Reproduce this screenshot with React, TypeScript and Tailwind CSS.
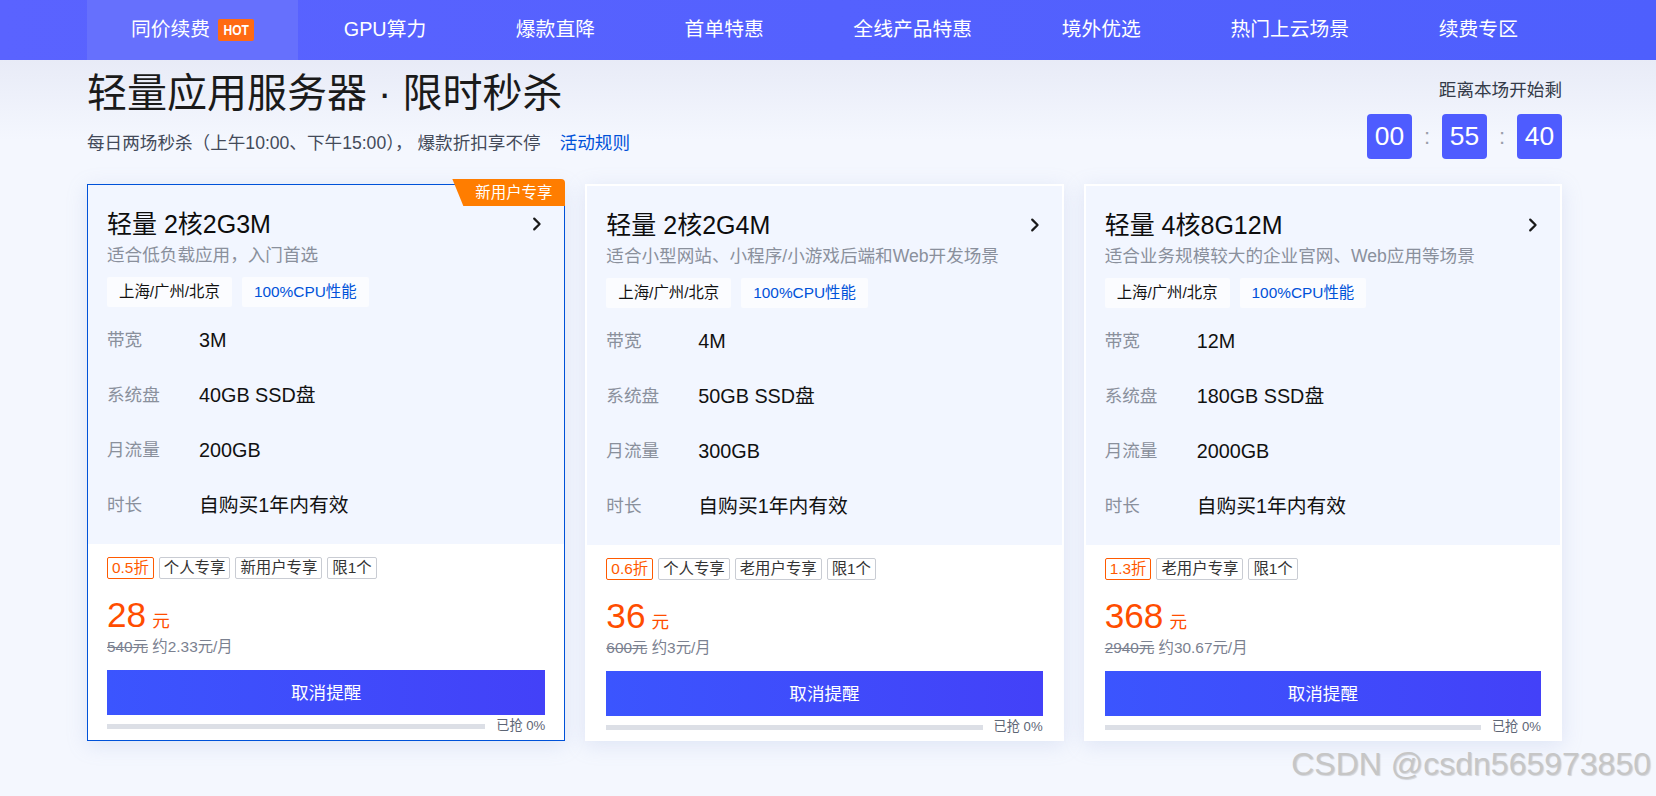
import React from "react";

type CardData = {
  title: string;
  desc: string;
  bw: string;
  disk: string;
  flow: string;
  discount: string;
  tags: string[];
  price: string;
  orig: string;
  monthly: string;
  selected?: boolean;
};

const cards: CardData[] = [
  {
    title: "轻量 2核2G3M",
    desc: "适合低负载应用，入门首选",
    bw: "3M",
    disk: "40GB SSD盘",
    flow: "200GB",
    discount: "0.5折",
    tags: ["个人专享", "新用户专享", "限1个"],
    price: "28",
    orig: "540元",
    monthly: "约2.33元/月",
    selected: true,
  },
  {
    title: "轻量 2核2G4M",
    desc: "适合小型网站、小程序/小游戏后端和Web开发场景",
    bw: "4M",
    disk: "50GB SSD盘",
    flow: "300GB",
    discount: "0.6折",
    tags: ["个人专享", "老用户专享", "限1个"],
    price: "36",
    orig: "600元",
    monthly: "约3元/月",
  },
  {
    title: "轻量 4核8G12M",
    desc: "适合业务规模较大的企业官网、Web应用等场景",
    bw: "12M",
    disk: "180GB SSD盘",
    flow: "2000GB",
    discount: "1.3折",
    tags: ["老用户专享", "限1个"],
    price: "368",
    orig: "2940元",
    monthly: "约30.67元/月",
  },
];

const navItems = ["GPU算力", "爆款直降", "首单特惠", "全线产品特惠", "境外优选", "热门上云场景", "续费专区"];

function Chevron() {
  return (
    <svg width="10" height="14" viewBox="0 0 10 14" className="mr-[3px]">
      <path d="M2.2 1.6 L7.6 7 L2.2 12.4" fill="none" stroke="#1a1a1a" strokeWidth="2.2" strokeLinecap="round" strokeLinejoin="round" />
    </svg>
  );
}

function SpecRow({ label, value }: { label: string; value: string }) {
  return (
    <div className="flex h-[55px] items-center">
      <div className="w-[92px] text-[17.6px] text-[#8a909c]">{label}</div>
      <div className="text-[19.8px] text-[#111]">{value}</div>
    </div>
  );
}

function Card({ c }: { c: CardData }) {
  return (
    <div
      className={
        c.selected
          ? "relative flex flex-col border border-[#0052d9] bg-white shadow-[0_4px_18px_rgba(160,175,220,0.25)]"
          : "relative flex flex-col border-2 border-white bg-white shadow-[0_4px_18px_rgba(160,175,220,0.25)]"
      }
    >
      {c.selected && (
        <div className="absolute -right-[1px] -top-[6px] z-10 flex h-[27px] w-[113px] items-center justify-end rounded-tr-[4px] bg-[#ff7d00] pr-[13px] text-[15.4px] text-white [clip-path:polygon(0_0,100%_0,100%_100%,11px_100%)]">
          新用户专享
        </div>
      )}
      <div className="bg-[#f2f6ff] px-[19px] pb-[11px] pt-[23px]">
        <div className="flex h-[32px] items-center justify-between">
          <div className="text-[25px] leading-[32px] text-[#0d0d0d]">{c.title}</div>
          <Chevron />
        </div>
        <div className="mt-[3px] text-[17.6px] leading-[24px] text-[#8a909c]">{c.desc}</div>
        <div className="mt-[10px] flex gap-[10px]">
          <div className="flex h-[30px] items-center rounded-[2px] bg-[#fbfcff] px-[12px] text-[15.4px] text-[#111]">上海/广州/北京</div>
          <div className="flex h-[30px] items-center rounded-[2px] bg-[#fbfcff] px-[12px] text-[15.4px] text-[#0052d9]">100%CPU性能</div>
        </div>
        <div className="mt-[6px]">
          <SpecRow label="带宽" value={c.bw} />
          <SpecRow label="系统盘" value={c.disk} />
          <SpecRow label="月流量" value={c.flow} />
          <SpecRow label="时长" value="自购买1年内有效" />
        </div>
      </div>
      <div className="flex flex-1 flex-col bg-white px-[19px] pb-[4px] pt-[13px]">
        <div className="flex gap-[5px]">
          <div className="flex h-[22px] items-center rounded-[2px] border border-[#ff5a00] px-[4px] text-[15.4px] text-[#ff5a00]">{c.discount}</div>
          {c.tags.map((t) => (
            <div key={t} className="flex h-[22px] items-center rounded-[2px] border border-[#c9ccd3] px-[4px] text-[15.4px] text-[#333]">
              {t}
            </div>
          ))}
        </div>
        <div className="mt-[18px] flex items-baseline text-[#ff4d00]">
          <span className="text-[35.2px] leading-none">{c.price}</span>
          <span className="ml-[6px] text-[17.6px] leading-none">元</span>
        </div>
        <div className="mt-[5px] text-[15.4px] leading-[20px] text-[#7b8190]">
          <span className="line-through">{c.orig}</span> {c.monthly}
        </div>
        <button className="mt-[13px] flex h-[45px] w-full items-center justify-center bg-linear-to-r from-[#3b55fe] to-[#4341f8] text-[17.6px] text-white">
          取消提醒
        </button>
        <div className="mt-[3px] flex h-[16px] items-center gap-[11px]">
          <div className="h-[5px] flex-1 bg-[#dcdfe6]" />
          <div className="text-[13.2px] leading-[16px] text-[#5d6575]">已抢 0%</div>
        </div>
      </div>
    </div>
  );
}

export default function App() {
  return (
    <div className="relative min-h-screen w-full bg-[#f4f7fe] font-['Liberation_Sans','Noto_Sans_CJK_SC',sans-serif]">
      <div className="h-[60px] w-full bg-linear-to-r from-[#5a63ff] to-[#4e5ffd] pr-[7px]">
        <div className="mx-auto flex h-full w-[1475px] items-center justify-between text-[19.8px] text-white">
          <div className="flex h-full items-center bg-[#6670fd] px-[44px]">
            <span>同价续费</span>
            <span className="ml-[8px] flex h-[22px] w-[36px] items-center justify-center rounded-[2px] bg-[#ff6a13]">
              <span className="inline-block scale-x-[0.78] text-[15.4px] font-bold leading-none">HOT</span>
            </span>
          </div>
          {navItems.map((n) => (
            <div key={n} className="flex h-full items-center px-[44px]">
              {n}
            </div>
          ))}
        </div>
      </div>
      <div className="bg-[linear-gradient(180deg,#e8ebf7_0px,#f4f7fe_80px,#f4f7fe_100%)] pr-[7px] pb-[57px]">
        <div className="mx-auto w-[1475px]">
          <div className="flex items-start justify-between">
            <div className="pt-[13px]">
              <h1 className="text-[40px] leading-[40px] text-[#1a1a1a]">轻量应用服务器 · 限时秒杀</h1>
              <div className="mt-[18px] text-[17.6px] leading-[24px] text-[#434a59]">
                每日两场秒杀（上午10:00、下午15:00）， 爆款折扣享不停
                <span className="ml-[19px] text-[#0052d9]">活动规则</span>
              </div>
            </div>
            <div className="flex flex-col items-end pt-[18px]">
              <div className="text-[17.6px] leading-[24px] text-[#333a48]">距离本场开始剩</div>
              <div className="mt-[12px] flex items-center">
                <div className="flex h-[45px] w-[45px] items-center justify-center rounded-[4px] bg-[#4e5cff] text-[26.4px] text-white">00</div>
                <div className="w-[30px] text-center text-[22px] text-[#9aa0ab]">:</div>
                <div className="flex h-[45px] w-[45px] items-center justify-center rounded-[4px] bg-[#4e5cff] text-[26.4px] text-white">55</div>
                <div className="w-[30px] text-center text-[22px] text-[#9aa0ab]">:</div>
                <div className="flex h-[45px] w-[45px] items-center justify-center rounded-[4px] bg-[#4e5cff] text-[26.4px] text-white">40</div>
              </div>
            </div>
          </div>
          <div className="mt-[25px] grid grid-cols-3 gap-[20px]">
            {cards.map((c) => (
              <Card key={c.title} c={c} />
            ))}
          </div>
        </div>
      </div>
      <div className="pointer-events-none absolute right-[5px] top-[748px] text-[32px] leading-[32px] text-[#c6c6c6] [text-shadow:1px_1px_1px_rgba(0,0,0,0.15)]">
        CSDN @csdn565973850
      </div>
    </div>
  );
}
